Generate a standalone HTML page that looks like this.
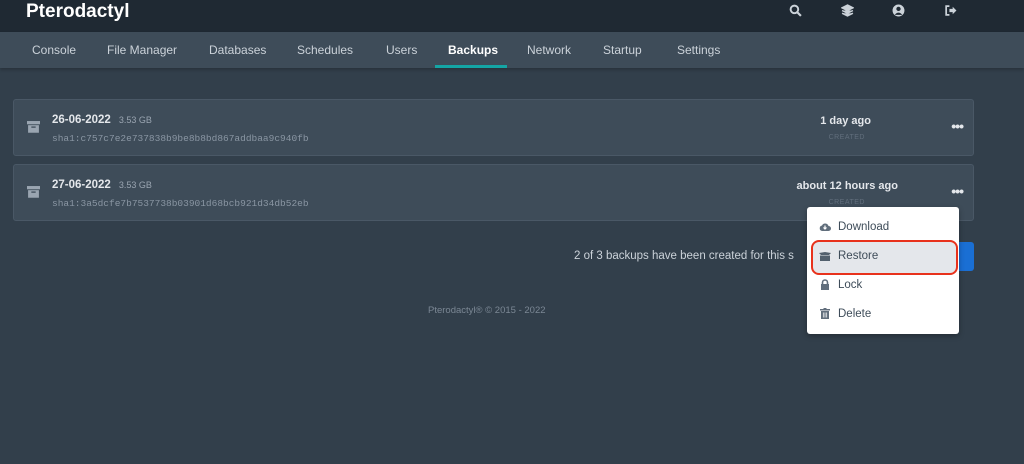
<!DOCTYPE html>
<html><head><style>
body{margin:0;width:1024px;height:464px;background:#323f4b;font-family:"Liberation Sans",sans-serif;position:relative;overflow:hidden}
.hdr{position:absolute;left:0;top:0;width:1024px;height:32px;background:#1f2933}
.logo{position:absolute;left:26px;top:1px;color:#fff;font-size:19px;font-weight:bold;letter-spacing:0}
.ic{position:absolute;top:4px;width:13px;height:13px}
.nav{position:absolute;left:0;top:32px;width:1024px;height:36px;background:#3e4c59;box-shadow:0 2px 3px rgba(0,0,0,.2)}
.nav span{position:absolute;top:11px;font-size:12px;color:#cbd2d9}
.card{position:absolute;left:13px;width:961px;height:57px;background:#3e4c59;border:1px solid #4a5866;border-radius:3px;box-sizing:border-box}
.arch{position:absolute;left:13px;top:21px;width:13px;height:12px}
.name{position:absolute;left:38px;top:14px;color:#e4e7eb;font-size:11.5px;font-weight:bold}
.size{font-weight:normal;font-size:9px;color:#9aa5b1;margin-left:8px}
.sha{position:absolute;left:38px;top:33px;font-family:"Liberation Mono",monospace;font-size:9.5px;color:#8a96a3}
.ago{position:absolute;right:75px;top:15px;color:#e4e7eb;font-size:11px;font-weight:bold;text-align:center}
.cr{position:absolute;right:108px;top:34px;color:#616e7c;font-size:7px;letter-spacing:.5px}
.dots{position:absolute;right:10px;top:18px;color:#e4e7eb;font-size:14px;font-weight:bold;letter-spacing:-1px}
.menu{position:absolute;left:807px;top:207px;width:152px;height:127px;background:#fff;border-radius:3px;box-shadow:0 2px 6px rgba(0,0,0,.3)}
.mi{position:absolute;left:31px;font-size:11.5px;color:#3e4c59}
.hl{position:absolute;left:4px;top:33px;width:147px;height:35px;border:2px solid #e8321c;border-radius:8px;box-sizing:border-box;background:#e4e7eb}
</style></head><body>
<div class="hdr">
<div class="logo">Pterodactyl</div>
<svg class="ic" style="left:789px" viewBox="0 0 12 12"><circle cx="5" cy="5" r="3.5" stroke="#cbd2d9" stroke-width="1.8" fill="none"/><path d="M7.5 7.5L11 11" stroke="#cbd2d9" stroke-width="2"/></svg>
<svg class="ic" style="left:841px" viewBox="0 0 12 12"><path d="M6 1L11 3.5 6 6 1 3.5Z M1 6L6 8.5 11 6 M1 8.5L6 11 11 8.5" stroke="#cbd2d9" stroke-width="1.4" fill="#cbd2d9"/></svg>
<svg class="ic" style="left:892px" viewBox="0 0 12 12"><circle cx="6" cy="6" r="5.5" fill="#cbd2d9"/><circle cx="6" cy="4.5" r="2" fill="#1f2933"/><path d="M2.5 10Q6 6 9.5 10" fill="#1f2933"/></svg>
<svg class="ic" style="left:944px" viewBox="0 0 12 12"><path d="M5 2H2V10H5" stroke="#cbd2d9" stroke-width="1.6" fill="none"/><path d="M5 4.5H8V2.5L11.5 6 8 9.5V7.5H5Z" fill="#cbd2d9"/></svg>
</div>
<div class="nav">
<span style="left:32px">Console</span><span style="left:107px">File Manager</span><span style="left:209px">Databases</span><span style="left:297px">Schedules</span><span style="left:386px">Users</span><span style="left:448px;color:#fff;font-weight:bold">Backups</span><span style="left:527px">Network</span><span style="left:603px">Startup</span><span style="left:677px">Settings</span>
<div style="position:absolute;left:435px;top:33px;width:72px;height:3px;background:#14a5a5"></div>
</div>
<div class="card" style="top:99px">
<svg class="arch" viewBox="0 0 12 11"><rect x="0" y="0" width="12" height="3" fill="#9aa5b1"/><rect x="1" y="3.8" width="10" height="7" fill="#9aa5b1"/><rect x="4" y="5" width="4" height="1.2" fill="#3e4c59"/></svg>
<div class="name">26-06-2022<span class="size">3.53 GB</span></div>
<div class="sha">sha1:c757c7e2e737838b9be8b8bd867addbaa9c940fb</div>
<div class="ago" style="right:102px">1 day ago</div><div class="cr">CREATED</div><div class="dots">•••</div>
</div>
<div class="card" style="top:164px">
<svg class="arch" viewBox="0 0 12 11"><rect x="0" y="0" width="12" height="3" fill="#9aa5b1"/><rect x="1" y="3.8" width="10" height="7" fill="#9aa5b1"/><rect x="4" y="5" width="4" height="1.2" fill="#3e4c59"/></svg>
<div class="name">27-06-2022<span class="size">3.53 GB</span></div>
<div class="sha">sha1:3a5dcfe7b7537738b03901d68bcb921d34db52eb</div>
<div class="ago">about 12 hours ago</div><div class="cr">CREATED</div><div class="dots">•••</div>
</div>
<div style="position:absolute;left:574px;top:250px;font-size:11.5px;color:#cbd2d9">2 of 3 backups have been created for this s</div>
<div style="position:absolute;left:950px;top:242px;width:24px;height:29px;background:#1a6fd4;border-radius:3px"></div>
<div style="position:absolute;left:428px;top:305px;font-size:9.5px;color:#7b8794">Pterodactyl® © 2015 - 2022</div>
<div class="menu">
<div class="hl"></div>
<svg style="position:absolute;left:12px;top:15px" width="12" height="10" viewBox="0 0 12 10"><path d="M3 9H9.5A2.5 2.5 0 0 0 9.5 4 3.5 3.5 0 0 0 3 3.5 2.8 2.8 0 0 0 3 9Z" fill="#616e7c"/><path d="M6 3.5V7M4.5 5.5L6 7 7.5 5.5" stroke="#fff" stroke-width="1.2" fill="none"/></svg>
<div class="mi" style="top:14px">Download</div>
<svg style="position:absolute;left:12px;top:45px" width="12" height="9" viewBox="0 0 12 9"><path d="M0 1L6 0 12 1 10 3H2Z M1 3.5H11V9H1Z" fill="#52606d"/></svg>
<div class="mi" style="top:43px">Restore</div>
<svg style="position:absolute;left:13px;top:72px" width="10" height="11" viewBox="0 0 10 11"><path d="M2.5 5V3.5A2.5 2.5 0 0 1 7.5 3.5V5" stroke="#616e7c" stroke-width="1.6" fill="none"/><rect x="1" y="5" width="8" height="6" fill="#616e7c"/></svg>
<div class="mi" style="top:72px">Lock</div>
<svg style="position:absolute;left:13px;top:101px" width="10" height="11" viewBox="0 0 10 11"><rect x="0" y="1" width="10" height="1.5" fill="#616e7c"/><rect x="3.5" y="0" width="3" height="1.5" fill="#616e7c"/><path d="M1 3H9V11H1Z" fill="#616e7c"/><path d="M3.3 4.5V9.5M5 4.5V9.5M6.7 4.5V9.5" stroke="#fff" stroke-width=".7"/></svg>
<div class="mi" style="top:101px">Delete</div>
</div>
</body></html>
